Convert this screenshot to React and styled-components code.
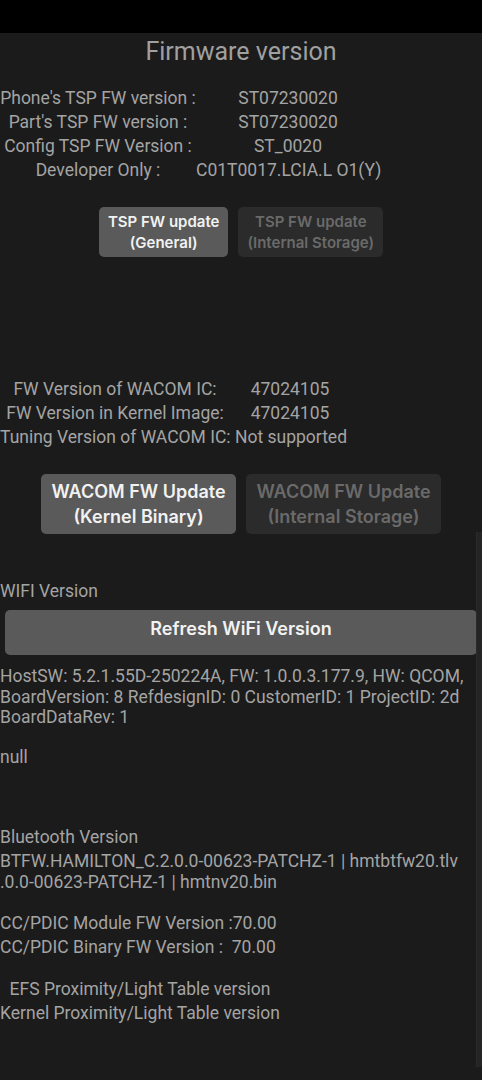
import React from "react";
import styled, { createGlobalStyle } from "styled-components";

const GlobalStyle = createGlobalStyle`
  html, body {
    margin: 0;
    padding: 0;
    background: #1b1b1b;
  }
  body {
    font-family: Roboto, "Noto Sans", "Liberation Sans", sans-serif;
  }
`;

const Page = styled.div`
  position: relative;
  width: 482px;
  min-height: 1080px;
  background: #1b1b1b;
  color: #a4a4a4;
  overflow: hidden;
`;

const StatusBar = styled.div`
  height: 33px;
  background: #000;
`;

const Title = styled.h1`
  margin: 4px 0 0;
  font-size: 25px;
  line-height: 30px;
  font-weight: 400;
  text-align: center;
  color: #a0a0a0;
`;

const InfoGrid = styled.div`
  display: grid;
  grid-template-columns: ${(p) => p.$cols};
  margin-top: ${(p) => p.$mt || 0}px;
  font-size: 17.5px;
  line-height: 24px;
`;

const Cell = styled.div`
  text-align: center;
  white-space: nowrap;
`;

const FullRow = styled.div`
  grid-column: 1 / -1;
  white-space: nowrap;
`;

const ButtonRow = styled.div`
  display: flex;
  justify-content: center;
  gap: 10px;
  margin-top: ${(p) => p.$mt}px;
`;

const ActionButton = styled.button`
  font-family: Inter, "Open Sans", "Liberation Sans", sans-serif;
  font-weight: 600;
  border: none;
  border-radius: 5px;
  padding: 0 9px;
  height: ${(p) => (p.$big ? 60 : 50)}px;
  width: ${(p) => (p.$big ? "195px" : "auto")};
  font-size: ${(p) => (p.$big ? 18 : 15)}px;
  line-height: ${(p) => (p.$big ? 25 : 21)}px;
  background: ${(p) => (p.$disabled ? "#2b2b2b" : "#5a5a5a")};
  color: ${(p) => (p.$disabled ? "#6a6a6a" : "#f2f2f2")};
  text-align: center;
`;

const SectionLabel = styled.div`
  font-size: 17.5px;
  line-height: 24px;
  white-space: nowrap;
  margin-top: ${(p) => p.$mt || 0}px;
`;

const WideButton = styled.button`
  display: block;
  width: calc(100% - 10px);
  margin: 7px 5px 0;
  height: 45px;
  padding: 0 0 8px;
  border: none;
  border-radius: 5px;
  background: #5a5a5a;
  color: #f2f2f2;
  font-family: Inter, "Open Sans", "Liberation Sans", sans-serif;
  font-weight: 600;
  font-size: 18px;
`;

const Paragraph = styled.div`
  font-size: 17.5px;
  line-height: 20.5px;
  white-space: nowrap;
  margin-top: ${(p) => p.$mt || 0}px;
`;

const CenteredBlock = styled.div`
  width: fit-content;
  text-align: center;
  font-size: 17.5px;
  line-height: 24px;
  white-space: nowrap;
  margin-top: ${(p) => p.$mt || 0}px;
`;

const ScrollIndicator = styled.div`
  position: absolute;
  right: 0;
  top: 532px;
  width: 5px;
  height: 535px;
  background: #242424;
  border-left: 1px solid #2b2b2b;
`;

export default function App() {
  return (
    <Page>
      <GlobalStyle />
      <StatusBar />
      <Title>Firmware version</Title>

      <InfoGrid $cols="196px 184px" $mt={19}>
        <Cell>Phone's TSP FW version :</Cell>
        <Cell>ST07230020</Cell>
        <Cell>Part's TSP FW version :</Cell>
        <Cell>ST07230020</Cell>
        <Cell>Config TSP FW Version :</Cell>
        <Cell>ST_0020</Cell>
        <Cell>Developer Only :</Cell>
        <Cell>C01T0017.LCIA.L O1(Y)</Cell>
      </InfoGrid>

      <ButtonRow $mt={25}>
        <ActionButton>
          TSP FW update
          <br />
          (General)
        </ActionButton>
        <ActionButton $disabled>
          TSP FW update
          <br />
          (Internal Storage)
        </ActionButton>
      </ButtonRow>

      <InfoGrid $cols="230px 120px" $mt={120}>
        <Cell>FW Version of WACOM IC:</Cell>
        <Cell>47024105</Cell>
        <Cell>FW Version in Kernel Image:</Cell>
        <Cell>47024105</Cell>
        <FullRow>Tuning Version of WACOM IC: Not supported</FullRow>
      </InfoGrid>

      <ButtonRow $mt={25}>
        <ActionButton $big>
          WACOM FW Update
          <br />
          (Kernel Binary)
        </ActionButton>
        <ActionButton $big $disabled>
          WACOM FW Update
          <br />
          (Internal Storage)
        </ActionButton>
      </ButtonRow>

      <SectionLabel $mt={45}>WIFI Version</SectionLabel>
      <WideButton>Refresh WiFi Version</WideButton>

      <Paragraph $mt={11}>
        HostSW: 5.2.1.55D-250224A, FW: 1.0.0.3.177.9, HW: QCOM,
        <br />
        BoardVersion: 8 RefdesignID: 0 CustomerID: 1 ProjectID: 2d
        <br />
        BoardDataRev: 1
      </Paragraph>
      <Paragraph $mt={19}>null</Paragraph>

      <SectionLabel $mt={58}>Bluetooth Version</SectionLabel>
      <Paragraph $mt={2}>
        BTFW.HAMILTON_C.2.0.0-00623-PATCHZ-1 | hmtbtfw20.tlv
        <br />
        .0.0-00623-PATCHZ-1 | hmtnv20.bin
      </Paragraph>

      <SectionLabel $mt={19}>CC/PDIC Module FW Version :70.00</SectionLabel>
      <SectionLabel>CC/PDIC Binary FW Version :&nbsp; 70.00</SectionLabel>

      <CenteredBlock $mt={18}>
        EFS Proximity/Light Table version
        <br />
        Kernel Proximity/Light Table version
      </CenteredBlock>

      <ScrollIndicator />
    </Page>
  );
}
